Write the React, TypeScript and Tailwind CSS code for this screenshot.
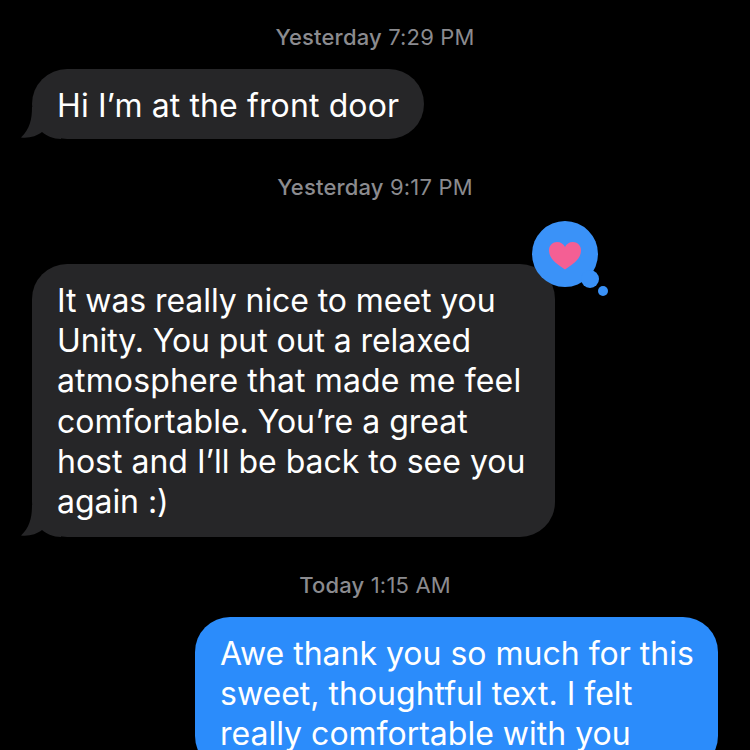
import React from 'react';

const font = { fontFamily: 'Inter, "Noto Sans", sans-serif' };

const Stamp = ({ day, time, className }: { day: string; time: string; className: string }) => (
  <div className={`shrink-0 text-center text-[22px] leading-[28px] tracking-[0.17px] text-[#8b8b8f] ${className}`}>
    <span className="font-medium">{day}</span> <span>{time}</span>
  </div>
);

const Tail = () => (
  <svg className="absolute left-[-11px] bottom-0" width="40" height="32" viewBox="0 0 40 32">
    <path d="M11 0 C11 12 9 22 0 30.500 C8 31.500 16 29 21 25 C26 29 32 32 40 32 L40 0 Z" fill="#262628" />
  </svg>
);

type Line = { text: string; tracking: string };

const Bubble = ({ lines, className }: { lines: Line[]; className: string }) => (
  <div className={`relative shrink-0 rounded-[35px] bg-[#262628] pl-[25px] text-[32px] leading-[40.200px] text-white ${className}`}>
    <Tail />
    <div className="relative">
      {lines.map((line) => (
        <div key={line.text} className={`whitespace-nowrap ${line.tracking}`}>{line.text}</div>
      ))}
    </div>
  </div>
);

export default function App() {
  return (
    <div className="flex h-[750px] w-[750px] flex-col overflow-hidden bg-black" style={font}>
      <Stamp day="Yesterday" time="7:29 PM" className="mt-[23px]" />
      <Bubble
        lines={[{ text: 'Hi I’m at the front door', tracking: 'tracking-[0.12px]' }]}
        className="ml-[32px] mt-[18px] h-[70px] w-[392px] pt-[17px]"
      />
      <Stamp day="Yesterday" time="9:17 PM" className="mt-[34px]" />

      <Bubble
        lines={[
          { text: 'It was really nice to meet you', tracking: 'tracking-[-0.08px]' },
          { text: 'Unity. You put out a relaxed', tracking: 'tracking-[-0.08px]' },
          { text: 'atmosphere that made me feel', tracking: 'tracking-[0.13px]' },
          { text: 'comfortable. You’re a great', tracking: 'tracking-[-0.02px]' },
          { text: 'host and I’ll be back to see you', tracking: 'tracking-[0px]' },
          { text: 'again :)', tracking: 'tracking-[-0.05px]' },
        ]}
        className="ml-[32px] mt-[63px] h-[273px] w-[523px] pt-[17px]"
      />

      {/* tapback */}
      <svg className="absolute left-[525px] top-[215px]" width="90" height="90" viewBox="0 0 90 90">
        <circle cx="40" cy="39" r="33" fill="#3a92f8" />
        <circle cx="65" cy="64" r="9" fill="#3a92f8" />
        <circle cx="78" cy="76" r="5" fill="#3a92f8" />
        <path
          d="M40 54.500 C32 49 24 44 24 35.500 C24 30 28 27 32 27 C35.800 27 38.700 29 40 32 C41.300 29 44.200 27 48 27 C52 27 56 30 56 35.500 C56 44 48 49 40 54.500 Z"
          fill="#f45f94"
        />
      </svg>

      <Stamp day="Today" time="1:15 AM" className="mt-[34px]" />
      <div className="ml-[195px] mt-[18px] w-[523px] shrink-0 rounded-[35px] bg-[#2b8cfb] px-[25px] pb-[16px] pt-[17px] text-[32px] leading-[40.200px] tracking-[0px] text-white">
        {['Awe thank you so much for this', 'sweet, thoughtful text. I felt', 'really comfortable with you'].map((line) => (
          <div key={line} className="whitespace-nowrap">{line}</div>
        ))}
      </div>
    </div>
  );
}
